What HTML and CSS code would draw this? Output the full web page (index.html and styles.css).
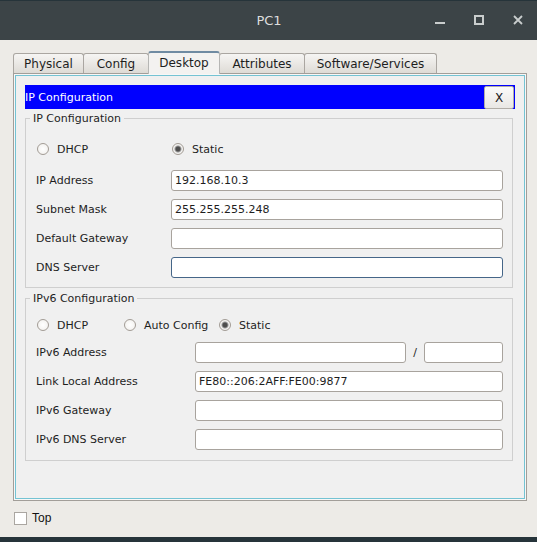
FILE: index.html
```html
<!DOCTYPE html>
<html>
<head>
	<title>PC1</title>
	<link rel="stylesheet" href="styles.css">
</head>
<body>

	<div class="window">
		<div class="titlebar">
			<span class="title">PC1</span>
			<div class="controls">
				<svg width="10" height="10" viewBox="0 0 10 10"><rect x="0" y="7" width="10" height="2" fill="#c9cdcd"/></svg>
				<svg width="10" height="10" viewBox="0 0 10 10"><rect x="1" y="1" width="8" height="8" fill="none" stroke="#c9cdcd" stroke-width="2"/></svg>
				<svg width="10" height="10" viewBox="0 0 10 10"><path d="M1 1L9 9M9 1L1 9" stroke="#c9cdcd" stroke-width="1.8"/></svg>
			</div>
		</div>

		<div class="content">
			<div class="tabs">
				<div class="tab t-physical">Physical</div>
				<div class="tab t-config">Config</div>
				<div class="tab t-desktop active">Desktop</div>
				<div class="tab t-attr">Attributes</div>
				<div class="tab t-soft">Software/Services</div>
			</div>

			<div class="panel">
				<div class="panel-inner">
					<div class="bar">
						<span>IP Configuration</span>
						<button class="close">X</button>
					</div>

					<div class="group">
						<div class="group-title">IP Configuration</div>
						<div class="opts v4">
							<label class="opt"><input type="radio" name="v4"> DHCP</label>
							<label class="opt"><input type="radio" name="v4" checked> Static</label>
						</div>
						<div class="row v4">
							<span class="lbl">IP Address</span>
							<input class="field" type="text" value="192.168.10.3">
						</div>
						<div class="row v4">
							<span class="lbl">Subnet Mask</span>
							<input class="field" type="text" value="255.255.255.248">
						</div>
						<div class="row v4">
							<span class="lbl">Default Gateway</span>
							<input class="field" type="text" value="">
						</div>
						<div class="row v4">
							<span class="lbl">DNS Server</span>
							<input class="field focus" type="text" value="">
						</div>
					</div>

					<div class="group g6">
						<div class="group-title">IPv6 Configuration</div>
						<div class="opts v6">
							<label class="opt"><input type="radio" name="v6"> DHCP</label>
							<label class="opt"><input type="radio" name="v6"> Auto Config</label>
							<label class="opt"><input type="radio" name="v6" checked> Static</label>
						</div>
						<div class="row v6">
							<span class="lbl">IPv6 Address</span>
							<input class="field" type="text" value="">
							<span class="slash">/</span>
							<input class="field prefix" type="text" value="">
						</div>
						<div class="row v6">
							<span class="lbl">Link Local Address</span>
							<input class="field" type="text" value="FE80::206:2AFF:FE00:9877">
						</div>
						<div class="row v6">
							<span class="lbl">IPv6 Gateway</span>
							<input class="field" type="text" value="">
						</div>
						<div class="row v6">
							<span class="lbl">IPv6 DNS Server</span>
							<input class="field" type="text" value="">
						</div>
					</div>
				</div>
			</div>

			<label class="top"><span class="check"></span>Top</label>
		</div>
	</div>

</body>
</html>
```

FILE: styles.css
```css
body{
	margin: 0;
	background: #26343a;
	font-family: "DejaVu Sans", sans-serif;
	font-size: 11px;
	color: #1e1e1e;
}

.window{
	margin-top: 1px;
	width: 537px;
	height: 536px;
	display: flex;
	flex-direction: column;
	background: #edebe7;
}

.titlebar{
	height: 39px;
	background: #3c4447;
	display: flex;
	align-items: center;
	justify-content: center;
	position: relative;
}

.title{
	color: #dedede;
	font-size: 13px;
	margin-left: 1px;
}

.controls{
	position: absolute;
	top: 14px;
	right: 14px;
	display: flex;
	gap: 29px;
}

.controls svg{
	display: block;
}

.content{
	flex: 1;
	padding-left: 13px;
}

.tabs{
	display: flex;
	align-items: flex-end;
	height: 22px;
	margin-top: 11px;
	font-size: 12px;
}

.tab{
	height: 19px;
	line-height: 20px;
	text-align: center;
	border: 1px solid #aaa6a1;
	border-bottom: none;
	border-radius: 3px 3px 0 0;
	background: linear-gradient(#f6f5f3, #dedbd6);
	margin-right: -1px;
}

.t-physical{ width: 69px; }
.t-config{ width: 64px; }
.t-desktop{ width: 70px; }
.t-attr{ width: 84px; }
.t-soft{ width: 131px; }

.tab.active{
	height: 21px;
	border-color: #b6b6b4;
	border-top: 2px solid #6f8ba2;
	background: #f3f2f0;
	position: relative;
	z-index: 1;
	margin-bottom: -1px;
}

.panel{
	width: 512px;
	height: 426px;
	border: 1px solid #a29e99;
	background: #f7f7f7;
}

.panel-inner{
	margin: 1px;
	border: 1px solid #74c3d3;
	background: #f0f0f0;
	padding: 9px;
	box-sizing: border-box;
	width: 510px;
	height: 424px;
}

.bar{
	height: 24px;
	background: #0000ff;
	color: #fff;
	display: flex;
	align-items: center;
	justify-content: space-between;
}

.close{
	width: 30px;
	height: 23px;
	margin-right: 1px;
	margin-top: 1px;
	border: 1px solid #b1ada7;
	border-radius: 2px;
	background: linear-gradient(#fbfbfa, #e9e7e4);
	font-family: "DejaVu Sans", sans-serif;
	font-size: 12px;
	color: #222;
	padding: 0;
}

.group{
	margin: 9px 2px 0 0;
	border: 1px solid #cfcfcf;
	padding: 0 9px 9px 10px;
}

.g6{
	margin-top: 10px;
	padding-bottom: 10px;
}

.group-title{
	width: fit-content;
	margin: -7px 0 0 -6px;
	padding: 0 3px;
	line-height: 14px;
	background: #f0f0f0;
}

.opts{
	display: flex;
	align-items: center;
	height: 20px;
	margin-top: 13px;
	padding-left: 1px;
}

.opts.v6{
	margin-top: 9px;
}

.opt{
	display: flex;
	align-items: center;
	gap: 8px;
}

.v4 .opt:first-child{ width: 135px; }
.v6 .opt:nth-child(1){ width: 87px; }
.v6 .opt:nth-child(2){ width: 95px; }

.opt input{
	appearance: none;
	margin: 0;
	width: 12px;
	height: 12px;
	border: 1px solid #a29c95;
	border-radius: 50%;
	background: radial-gradient(#ffffff, #f0eeeb);
}

.opt input:checked{
	background: radial-gradient(circle, #4d4d4d 0, #4d4d4d 2px, #9a9a9a 3px, #f4f3f1 4px);
}

.row{
	display: flex;
	align-items: center;
	height: 21px;
	margin-top: 8px;
}

.opts + .row{
	margin-top: 11px;
}

.opts.v6 + .row{
	margin-top: 7px;
}

.lbl{
	width: 135px;
	flex: none;
}

.v6 .lbl{
	width: 159px;
}

.field{
	flex: 1;
	min-width: 0;
	height: 21px;
	box-sizing: border-box;
	border: 1px solid #a8a39d;
	border-radius: 3px;
	background: #fff;
	padding: 0 3px;
	font-family: "DejaVu Sans", sans-serif;
	font-size: 11px;
	color: #1e1e1e;
	outline: none;
}

.field.focus{
	border-color: #456688;
}

.slash{
	width: 18px;
	text-align: center;
	flex: none;
}

.prefix{
	flex: none;
	width: 79px;
}

.top{
	display: flex;
	align-items: center;
	gap: 5px;
	margin: 10px 0 0 1px;
	font-family: "Liberation Sans", sans-serif;
	font-size: 12px;
	color: #111;
}

.check{
	width: 11px;
	height: 11px;
	border: 1px solid #aaa6a1;
	background: #fff;
}
```
